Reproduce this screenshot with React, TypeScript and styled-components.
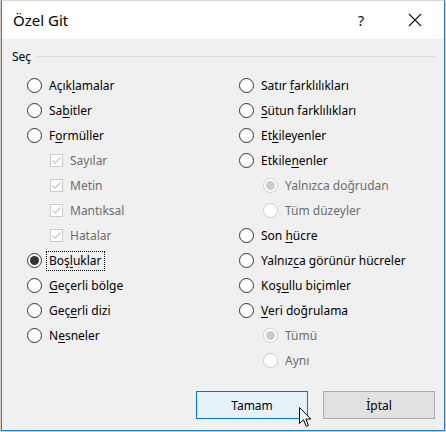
import React from "react";
import styled, { createGlobalStyle, css } from "styled-components";

const GlobalStyle = createGlobalStyle`
  html, body {
    margin: 0;
    padding: 0;
    background: #d8cfc6;
  }
  body {
    font-family: "Noto Sans", "Segoe UI", sans-serif;
    -webkit-font-smoothing: antialiased;
  }
`;

const Window = styled.div`
  position: relative;
  box-sizing: border-box;
  width: 444px;
  height: 431px;
  margin-left: 1px;
  background: #f0f0f0;
  border: 1px solid #1a7fd6;
  border-top-color: #d6d6d6;
  display: flex;
  flex-direction: column;
`;

const TitleBar = styled.div`
  height: 38px;
  background: #fff;
  display: flex;
  align-items: center;
  padding: 0 6px 0 11px;
  font-size: 15px;
  color: #000;
`;

const Title = styled.span`
  flex: 1;
  margin-top: -1px;
`;

const TitleButton = styled.span<{ $gap?: number }>`
  width: 46px;
  height: 38px;
  margin-right: ${(p) => p.$gap ?? 0}px;
  display: flex;
  align-items: center;
  justify-content: center;
  font-size: 15px;
  color: #111;
`;

const Body = styled.div`
  flex: 1;
  display: flex;
  flex-direction: column;
  padding: 9px 9px 0 10px;
`;

const Legend = styled.div`
  height: 16px;
  display: flex;
  align-items: center;
  gap: 6px;
  font-size: 12px;
  color: #000;
  &::after {
    content: "";
    flex: 1;
    height: 1px;
    background: #dcdcdc;
    margin-top: 1px;
  }
`;

const Columns = styled.div`
  display: grid;
  grid-template-columns: 212px 1fr;
  padding: 9px 0 0 15px;
`;

const Column = styled.div`
  display: flex;
  flex-direction: column;
`;

const Row = styled.div<{ $indent?: boolean }>`
  height: 25px;
  display: flex;
  align-items: center;
  gap: 7px;
  padding-left: ${(p) => (p.$indent ? "24px" : "0")};
  font-size: 12px;
`;

const Label = styled.span<{ $disabled?: boolean; $focused?: boolean }>`
  color: ${(p) => (p.$disabled ? "#6d6d6d" : "#000")};
  white-space: nowrap;
  line-height: 16px;
  u {
    text-underline-offset: 2px;
  }
  ${(p) =>
    p.$focused &&
    css`
      outline: 1px dotted #000;
      outline-offset: 1px;
      padding: 0 1px;
      margin-left: -1px;
    `}
`;

const RadioCircle = styled.span<{ $disabled?: boolean; $checked?: boolean }>`
  box-sizing: border-box;
  width: 15px;
  height: 15px;
  flex: none;
  border-radius: 50%;
  border: 1px solid ${(p) => (p.$disabled ? "#cccccc" : "#333")};
  background: #fff;
  display: flex;
  align-items: center;
  justify-content: center;
  &::after {
    content: "";
    display: ${(p) => (p.$checked ? "block" : "none")};
    width: 9px;
    height: 9px;
    border-radius: 50%;
    background: ${(p) => (p.$disabled ? "#cccccc" : "#333")};
  }
`;

const CheckBox = styled.span`
  box-sizing: border-box;
  width: 13px;
  height: 13px;
  flex: none;
  border: 1px solid #cccccc;
  background: #fff;
  display: flex;
  align-items: center;
  justify-content: center;
  margin-left: -1px;
`;

const Buttons = styled.div`
  display: flex;
  justify-content: flex-end;
  gap: 15px;
  padding: 18px 0 0 0;
`;

const Button = styled.div<{ $default?: boolean }>`
  box-sizing: border-box;
  width: 112px;
  height: 28px;
  display: flex;
  align-items: center;
  justify-content: center;
  font-size: 12px;
  color: #000;
  ${(p) =>
    p.$default
      ? css`
          background: #e5f1fb;
          border: 1px solid #0078d7;
        `
      : css`
          background: #e1e1e1;
          border: 1px solid #adadad;
        `}
`;

const Pointer = styled.svg`
  position: absolute;
  left: 297px;
  top: 406px;
`;

type Item = {
  label: React.ReactNode;
  kind?: "radio" | "check";
  indent?: boolean;
  disabled?: boolean;
  checked?: boolean;
  focused?: boolean;
};

const leftItems: Item[] = [
  { label: <>Açık<u>l</u>amalar</> },
  { label: <>Sa<u>b</u>itler</> },
  { label: <>F<u>o</u>rmüller</> },
  { label: "Sayılar", kind: "check", indent: true, disabled: true, checked: true },
  { label: "Metin", kind: "check", indent: true, disabled: true, checked: true },
  { label: "Mantıksal", kind: "check", indent: true, disabled: true, checked: true },
  { label: "Hatalar", kind: "check", indent: true, disabled: true, checked: true },
  { label: <>Boş<u>l</u>uklar</>, checked: true, focused: true },
  { label: <><u>G</u>eçerli bölge</> },
  { label: <>Geç<u>e</u>rli dizi</> },
  { label: <>N<u>e</u>sneler</> },
];

const rightItems: Item[] = [
  { label: <>Satır <u>f</u>arklılıkları</> },
  { label: <><u>S</u>ütun farklılıkları</> },
  { label: <>Et<u>k</u>ileyenler</> },
  { label: <>Etkile<u>n</u>enler</> },
  { label: "Yalnızca doğrudan", indent: true, disabled: true, checked: true },
  { label: "Tüm düzeyler", indent: true, disabled: true },
  { label: <>Son <u>h</u>ücre</> },
  { label: <>Yalnız<u>c</u>a görünür hücreler</> },
  { label: <>Koş<u>u</u>llu biçimler</> },
  { label: <><u>V</u>eri doğrulama</> },
  { label: "Tümü", indent: true, disabled: true, checked: true },
  { label: "Aynı", indent: true, disabled: true },
];

const CheckMark = () => (
  <svg width="11" height="11" viewBox="0 0 11 11">
    <path d="M1.5 5.5 L4.2 8.2 L9.5 2.5" fill="none" stroke="#c6c6c6" strokeWidth="1.2" />
  </svg>
);

const Option = ({ item }: { item: Item }) => (
  <Row $indent={item.indent}>
    {item.kind === "check" ? (
      <CheckBox>{item.checked && <CheckMark />}</CheckBox>
    ) : (
      <RadioCircle $disabled={item.disabled} $checked={item.checked} />
    )}
    <Label $disabled={item.disabled} $focused={item.focused}>
      {item.label}
    </Label>
  </Row>
);

export default function App() {
  return (
    <>
      <GlobalStyle />
      <Window>
        <TitleBar>
          <Title>Özel Git</Title>
          <TitleButton $gap={8}>?</TitleButton>
          <TitleButton>
            <svg width="14" height="14" viewBox="0 0 14 14">
              <path d="M1 1 L13 13 M13 1 L1 13" stroke="#111" strokeWidth="1.1" />
            </svg>
          </TitleButton>
        </TitleBar>
        <Body>
          <Legend>Seç</Legend>
          <Columns>
            <Column>
              {leftItems.map((item, i) => (
                <Option key={i} item={item} />
              ))}
            </Column>
            <Column>
              {rightItems.map((item, i) => (
                <Option key={i} item={item} />
              ))}
            </Column>
          </Columns>
          <Buttons>
            <Button $default>Tamam</Button>
            <Button>İptal</Button>
          </Buttons>
        </Body>
        <Pointer width="13" height="21" viewBox="0 0 13 21">
          <path
            d="M0.5 0.5 L0.5 16.5 L4.5 12.8 L7.2 19.3 L9.4 18.4 L6.8 12 L11.8 12 Z"
            fill="#fff"
            stroke="#000"
            strokeWidth="1"
            strokeLinejoin="round"
          />
        </Pointer>
      </Window>
    </>
  );
}
